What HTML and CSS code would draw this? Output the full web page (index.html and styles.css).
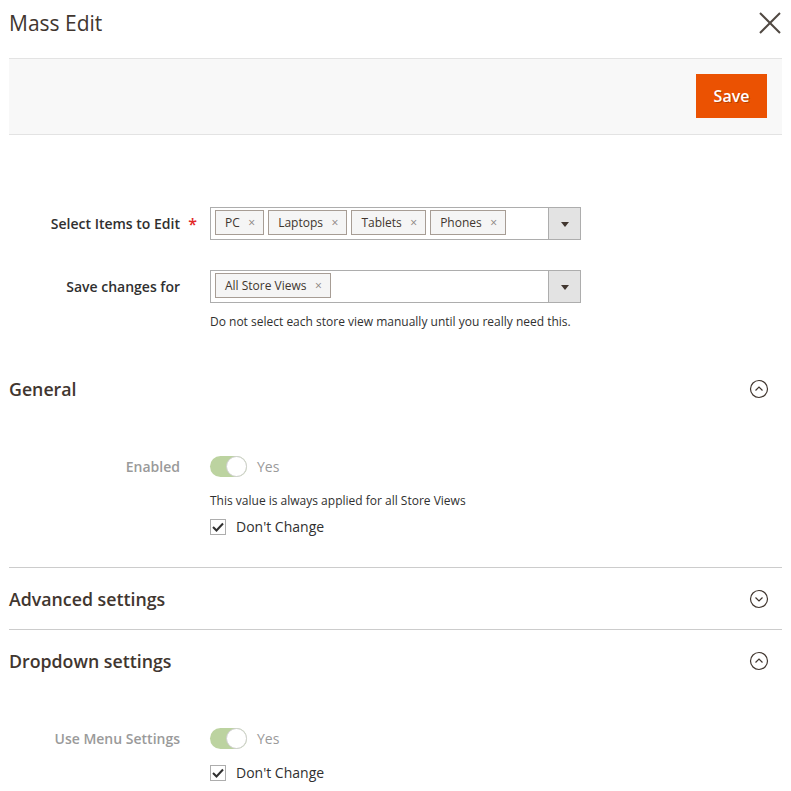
FILE: index.html
```html
<!DOCTYPE html>
<html>
<head>
<meta charset="utf-8">
<link rel="stylesheet" href="styles.css">
</head>
<body>
<div class="modal">
  <header class="modal-header">
    <h1 class="modal-title">Mass Edit</h1>
    <button class="close" aria-label="Close">
      <svg width="22" height="22" viewBox="0 0 22 22"><path d="M1 1L21 21M21 1L1 21" stroke="#514943" stroke-width="2" fill="none"/></svg>
    </button>
  </header>
  <div class="page-actions">
    <button class="btn-save">Save</button>
  </div>

  <div class="form">
    <div class="field">
      <label class="field-label required">Select Items to Edit</label>
      <div class="field-control">
        <div class="multiselect">
          <div class="tags">
            <span class="tag">PC<span class="x">×</span></span>
            <span class="tag">Laptops<span class="x">×</span></span>
            <span class="tag">Tablets<span class="x">×</span></span>
            <span class="tag">Phones<span class="x">×</span></span>
          </div>
          <span class="action"><span class="caret"></span></span>
        </div>
      </div>
    </div>
    <div class="field">
      <label class="field-label">Save changes for</label>
      <div class="field-control">
        <div class="multiselect">
          <div class="tags">
            <span class="tag">All Store Views<span class="x">×</span></span>
          </div>
          <span class="action"><span class="caret"></span></span>
        </div>
        <div class="note">Do not select each store view manually until you really need this.</div>
      </div>
    </div>
  </div>

  <section class="fieldset open">
    <div class="fs-title">
      <span>General</span>
      <svg class="chev" width="20" height="20" viewBox="0 0 20 20"><circle cx="10" cy="10" r="8.5" stroke="#41362f" stroke-width="1.2" fill="none"/><path d="M6.5 11.5L10 8L13.5 11.5" stroke="#41362f" stroke-width="1.2" fill="none"/></svg>
    </div>
    <div class="fs-content">
      <div class="field disabled">
        <label class="field-label">Enabled</label>
        <div class="field-control">
          <div class="switch"><span class="track"><span class="knob"></span></span><span class="switch-text">Yes</span></div>
          <div class="note note-tight">This value is always applied for all Store Views</div>
          <div class="check"><span class="box"><svg width="12" height="10" viewBox="0 0 12 10"><path d="M1 5L4.5 8.5L11 1.5" stroke="#303030" stroke-width="2" fill="none"/></svg></span><span>Don't Change</span></div>
        </div>
      </div>
    </div>
  </section>

  <section class="fieldset">
    <div class="fs-title">
      <span>Advanced settings</span>
      <svg class="chev" width="20" height="20" viewBox="0 0 20 20"><circle cx="10" cy="10" r="8.5" stroke="#41362f" stroke-width="1.2" fill="none"/><path d="M6.5 8.5L10 12L13.5 8.5" stroke="#41362f" stroke-width="1.2" fill="none"/></svg>
    </div>
  </section>

  <section class="fieldset open last">
    <div class="fs-title">
      <span>Dropdown settings</span>
      <svg class="chev" width="20" height="20" viewBox="0 0 20 20"><circle cx="10" cy="10" r="8.5" stroke="#41362f" stroke-width="1.2" fill="none"/><path d="M6.5 11.5L10 8L13.5 11.5" stroke="#41362f" stroke-width="1.2" fill="none"/></svg>
    </div>
    <div class="fs-content">
      <div class="field disabled">
        <label class="field-label">Use Menu Settings</label>
        <div class="field-control">
          <div class="switch"><span class="track"><span class="knob"></span></span><span class="switch-text">Yes</span></div>
          <div class="check check-near"><span class="box"><svg width="12" height="10" viewBox="0 0 12 10"><path d="M1 5L4.5 8.5L11 1.5" stroke="#303030" stroke-width="2" fill="none"/></svg></span><span>Don't Change</span></div>
        </div>
      </div>
    </div>
  </section>
</div>
</body>
</html>
```
FILE: styles.css
```css
* { box-sizing: border-box; }
html, body { margin: 0; padding: 0; background: #fff; }
body {
  font-family: "Open Sans", "Liberation Sans", sans-serif;
  color: #303030;
  font-size: 14px;
  overflow: hidden;
}
.modal { padding: 0 9px; }

.modal-header {
  height: 58px;
  display: flex;
  justify-content: space-between;
  align-items: flex-start;
}
.modal-title {
  margin: 0;
  padding-top: 8px;
  font-size: 21px;
  font-weight: 400;
  line-height: 30px;
  color: #41362f;
}
.close {
  background: none;
  border: 0;
  padding: 0;
  margin-top: 12px;
  margin-right: 1px;
  width: 22px;
  height: 22px;
  display: flex;
}

.page-actions {
  height: 77px;
  background: #f8f8f8;
  border-top: 1px solid #e3e3e3;
  border-bottom: 1px solid #e3e3e3;
  display: flex;
  justify-content: flex-end;
  align-items: flex-start;
  padding: 15px 15px 0 0;
}
.btn-save {
  width: 71px;
  height: 44px;
  background: #eb5202;
  border: 0;
  color: #fff;
  font-family: inherit;
  font-size: 16px;
  font-weight: 600;
  text-shadow: 1px 1px 0 rgba(0,0,0,0.25);
  padding: 0;
}

.form { padding-top: 72px; display: flex; flex-direction: column; gap: 30px; }

.field {
  display: grid;
  grid-template-columns: 171px 1fr;
  column-gap: 30px;
  align-items: start;
}
.field-label {
  text-align: right;
  font-weight: 600;
  font-size: 14px;
  line-height: 33px;
  color: #303030;
  position: relative;
}
.field-label.required::after {
  content: "*";
  color: #e22626;
  position: absolute;
  right: -17px;
  top: 1px;
  font-size: 16px;
}
.field-control { width: 371px; }

.multiselect {
  height: 33px;
  border: 1px solid #adadad;
  display: flex;
  background: #fff;
}
.tags { flex: 1; display: flex; gap: 4px; padding: 2px 0 0 4px; }
.tag {
  height: 25px;
  border: 1px solid #a79d95;
  background: #f5f5f5;
  font-size: 12px;
  color: #41362f;
  padding: 1px 0 0 9px;
  display: flex;
  align-items: center;
  line-height: 22px;
}
.tag .x {
  color: #8a837f;
  font-size: 12px;
  padding: 0 8px 0 8.5px;
}
.action {
  width: 32px;
  border-left: 1px solid #adadad;
  background: #e3e3e3;
  display: flex;
  align-items: center;
  justify-content: center;
}
.caret {
  width: 0; height: 0;
  border-left: 4px solid transparent;
  border-right: 4px solid transparent;
  border-top: 5px solid #41362f;
  margin-top: 2px;
}
.note {
  font-size: 12px;
  color: #303030;
  line-height: 18px;
  margin-top: 10px;
}
.note-tight { margin-top: 15px; }

.fieldset { border-bottom: 1px solid #cccccc; }
.fieldset.last { border-bottom: 0; }
.form + .fieldset { margin-top: 27px; }
.fs-title {
  height: 61px;
  display: flex;
  align-items: center;
  justify-content: space-between;
  font-size: 17.75px;
  font-weight: 600;
  color: #41362f;
  padding-right: 13px;
}
.fs-title span { padding-top: 1px; }
.fs-content { padding: 37px 0 30px; }

.field.disabled .field-label { color: #9a9a9a; line-height: 21px; }
.switch { display: flex; align-items: center; height: 21px; gap: 10px; }
.track {
  width: 37px;
  height: 21px;
  border-radius: 11px;
  background: #bcd3a0;
  position: relative;
  display: block;
}
.knob {
  position: absolute;
  right: 0;
  top: 0;
  width: 21px;
  height: 21px;
  border-radius: 50%;
  background: #fff;
  border: 1px solid #cfcfcf;
}
.switch-text { color: #9a9a9a; font-size: 14px; }

.check { display: flex; align-items: center; gap: 10px; margin-top: 7px; font-size: 14px; color: #303030; line-height: 20px; }
.check-near { margin-top: 14px; }
.box {
  width: 16px; height: 16px;
  border: 1px solid #adadad;
  background: #fff;
  display: flex;
  align-items: center;
  justify-content: center;
}
```
